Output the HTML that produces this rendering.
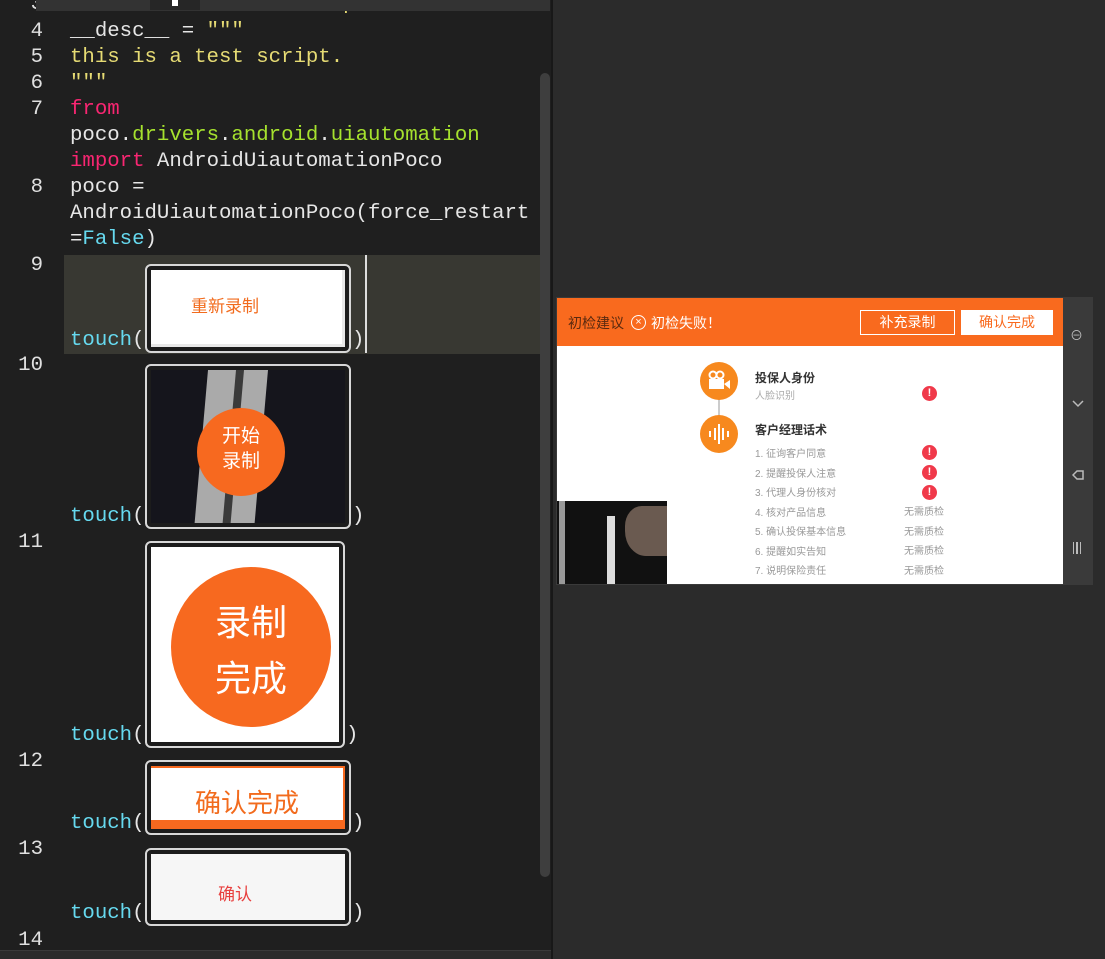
<!DOCTYPE html>
<html><head><meta charset="utf-8"><style>
*{margin:0;padding:0;box-sizing:border-box}
body{width:1105px;height:959px;overflow:hidden;background:#2b2b2b;position:relative;font-family:"Liberation Sans","Noto Sans CJK SC",sans-serif}
.ed{position:absolute;left:0;top:0;width:551px;height:959px;background:#1f1f1f;overflow:hidden}
.t{position:absolute;font-family:"Liberation Mono","DejaVu Sans Mono",monospace;font-size:20.7px;line-height:26px;color:#e6e6e6;white-space:pre}
.n{position:absolute;left:0;width:43px;text-align:right;font-family:"Liberation Mono",monospace;font-size:20.7px;line-height:26px;color:#e0e0e0}
.y{color:#e6db74}.p{color:#f92672}.g{color:#a6e22e}.c{color:#66d9ef}
.box{position:absolute;border:2px solid #d8d8d8;border-radius:6px;background:#1c1c1c;padding:4px}
.box>div{width:100%;height:100%;position:relative;overflow:hidden}
.abs{position:absolute}
.cn{font-family:"Liberation Sans","Noto Sans CJK SC",sans-serif}
</style></head><body>
<div class="ed">
<div class="n" style="top:-8px">3</div>
<div class="t" style="left:70px;top:-8px">__title__ = <span class="y">"test script title"</span></div>
<div class="abs" style="left:36px;top:0;width:514px;height:11px;background:#333"></div>
<div class="abs" style="left:150px;top:0;width:50px;height:10px;background:#262626"></div>
<div class="abs" style="left:172px;top:0;width:6px;height:6px;background:#fff"></div>
<div class="abs" style="left:64px;top:255px;width:476px;height:99px;background:#383832"></div>
<div class="abs" style="left:365px;top:255px;width:2px;height:98px;background:#ddd"></div>
<div class="abs" style="left:540px;top:73px;width:10px;height:804px;background:#3e3e3e;border-radius:5px"></div>

<div class="n" style="top:19px">4</div>
<div class="t" style="left:70px;top:19px">__desc__ = <span class="y">"""</span></div>
<div class="n" style="top:45px">5</div>
<div class="t y" style="left:70px;top:45px">this is a test script.</div>
<div class="n" style="top:71px">6</div>
<div class="t y" style="left:70px;top:71px">"""</div>
<div class="n" style="top:97px">7</div>
<div class="t" style="left:70px;top:97px"><span class="p">from</span>
poco.<span class="g">drivers</span>.<span class="g">android</span>.<span class="g">uiautomation</span>
<span class="p">import</span> AndroidUiautomationPoco</div>
<div class="n" style="top:175px">8</div>
<div class="t" style="left:70px;top:175px">poco =
AndroidUiautomationPoco(force_restart
=<span class="c">False</span>)</div>
<div class="n" style="top:253px">9</div>
<div class="t" style="left:70px;top:328px"><span class="c">touch</span>(</div>
<div class="t" style="left:352px;top:328px">)</div>
<div class="n" style="top:353px">10</div>
<div class="t" style="left:70px;top:504px"><span class="c">touch</span>(</div>
<div class="t" style="left:352px;top:504px">)</div>
<div class="n" style="top:530px">11</div>
<div class="t" style="left:70px;top:723px"><span class="c">touch</span>(</div>
<div class="t" style="left:346px;top:723px">)</div>
<div class="n" style="top:749px">12</div>
<div class="t" style="left:70px;top:811px"><span class="c">touch</span>(</div>
<div class="t" style="left:352px;top:811px">)</div>
<div class="n" style="top:837px">13</div>
<div class="t" style="left:70px;top:901px"><span class="c">touch</span>(</div>
<div class="t" style="left:352px;top:901px">)</div>
<div class="n" style="top:928px">14</div>

<div class="box" style="left:145px;top:264px;width:206px;height:89px"><div style="background:#fff;border-right:3px solid #e8e8e8;border-bottom:3px solid #e8e8e8">
<div class="abs cn" style="left:40px;top:22px;font-size:17px;color:#f26b1d">重新录制</div></div></div>

<div class="box" style="left:145px;top:364px;width:206px;height:165px"><div style="background:#15151c">
<div class="abs" style="left:50px;top:0;width:60px;height:160px;background:#aaa;transform:skewX(-5deg)"></div>
<div class="abs" style="left:78px;top:0;width:8px;height:160px;background:#3a3a3a;transform:skewX(-5deg)"></div>
<div class="abs" style="left:46px;top:38px;width:88px;height:88px;border-radius:50%;background:#f7691f"></div>
<div class="abs cn" style="left:46px;top:54px;width:88px;text-align:center;font-size:19px;line-height:25px;color:#fff">开始<br>录制</div></div></div>

<div class="box" style="left:145px;top:541px;width:200px;height:207px"><div style="background:#fff">
<div class="abs" style="left:20px;top:20px;width:160px;height:160px;border-radius:50%;background:#f7691f"></div>
<div class="abs cn" style="left:20px;top:48px;width:160px;text-align:center;font-size:36px;line-height:56px;color:#fff">录制<br>完成</div></div></div>

<div class="box" style="left:145px;top:760px;width:206px;height:75px"><div style="background:#fff;border-top:2px solid #f7691f;border-right:2px solid #f7691f">
<div class="abs cn" style="left:0;top:15px;width:100%;text-align:center;font-size:26px;color:#f26b1d">确认完成</div>
<div class="abs" style="left:0;bottom:0;width:100%;height:9px;background:#f7691f"></div></div></div>

<div class="box" style="left:145px;top:848px;width:206px;height:78px"><div style="background:#f6f6f6">
<div class="abs cn" style="left:0;top:26px;width:168px;text-align:center;font-size:17px;color:#e8403f">确认</div></div></div>

<div class="abs" style="left:0;top:950px;width:551px;height:9px;background:#2b2b2b;border-top:1px solid #3a3a3a"></div>
</div>

<div class="abs" style="left:551px;top:0;width:2px;height:959px;background:#181818"></div>
<div class="abs" style="left:556px;top:297px;width:537px;height:288px;background:#3a3a3a"></div>
<div class="abs" style="left:557px;top:298px;width:506px;height:286px;background:#fff;overflow:hidden">
 <div class="abs" style="left:0;top:0;width:506px;height:48px;background:#f96a1e"></div>
 <div class="abs" style="left:11px;top:15px;font-size:14px;color:#5a2a10">初检建议</div>
 <div class="abs" style="left:74px;top:17px;width:15px;height:15px;border:1.5px solid #fff;border-radius:50%;color:#fff;font-size:11px;line-height:12px;text-align:center">×</div>
 <div class="abs" style="left:94px;top:15px;font-size:14px;color:#fff">初检失败！</div>
 <div class="abs" style="left:303px;top:12px;width:95px;height:25px;border:1px solid #fff;color:#fff;font-size:14px;text-align:center;line-height:23px">补充录制</div>
 <div class="abs" style="left:404px;top:12px;width:92px;height:25px;background:#fff;color:#f96a1e;font-size:14px;text-align:center;line-height:25px">确认完成</div>
 <div class="abs" style="left:161px;top:100px;width:2px;height:20px;background:#ccc"></div>
 <div class="abs" style="left:143px;top:64px;width:38px;height:38px;border-radius:50%;background:#f7891e"></div>
 <svg class="abs" style="left:150px;top:72px" width="24" height="22" viewBox="0 0 24 22"><circle cx="6" cy="5" r="3.5" fill="none" stroke="#fff" stroke-width="2"/><circle cx="13" cy="5" r="3.5" fill="none" stroke="#fff" stroke-width="2"/><rect x="2" y="9" width="15" height="10" fill="#fff"/><path d="M17 14 L23 10 V19 Z" fill="#fff"/></svg>
 <div class="abs" style="left:143px;top:117px;width:38px;height:38px;border-radius:50%;background:#f7891e"></div>
 <svg class="abs" style="left:150px;top:124px" width="24" height="24"><g stroke="#fff" stroke-width="2"><line x1="3" y1="9" x2="3" y2="15"/><line x1="8" y1="6" x2="8" y2="18"/><line x1="12" y1="2" x2="12" y2="22"/><line x1="16" y1="6" x2="16" y2="18"/><line x1="21" y1="9" x2="21" y2="15"/></g></svg>
 <div class="abs" style="left:198px;top:71px;font-size:12px;font-weight:bold;color:#333">投保人身份</div>
 <div class="abs" style="left:198px;top:89px;font-size:10px;color:#aaa">人脸识别</div>
 <div class="abs" style="left:198px;top:123px;font-size:12px;font-weight:bold;color:#333">客户经理话术</div>
 <div class="abs" style="left:198px;top:147px;font-size:10px;line-height:19.5px;color:#999">1. 征询客户同意<br>2. 提醒投保人注意<br>3. 代理人身份核对<br>4. 核对产品信息<br>5. 确认投保基本信息<br>6. 提醒如实告知<br>7. 说明保险责任</div>
 <div class="abs" style="left:347px;top:205px;font-size:10px;line-height:19.5px;color:#999">无需质检<br>无需质检<br>无需质检<br>无需质检</div>
 <div class="abs" style="left:365px;top:88px;width:15px;height:15px;border-radius:50%;background:#f0394a;color:#fff;font-size:11px;font-weight:bold;text-align:center;line-height:15px">!</div>
 <div class="abs" style="left:365px;top:147px;width:15px;height:15px;border-radius:50%;background:#f0394a;color:#fff;font-size:11px;font-weight:bold;text-align:center;line-height:15px">!</div>
 <div class="abs" style="left:365px;top:167px;width:15px;height:15px;border-radius:50%;background:#f0394a;color:#fff;font-size:11px;font-weight:bold;text-align:center;line-height:15px">!</div>
 <div class="abs" style="left:365px;top:187px;width:15px;height:15px;border-radius:50%;background:#f0394a;color:#fff;font-size:11px;font-weight:bold;text-align:center;line-height:15px">!</div>
 <div class="abs" style="left:0;top:203px;width:110px;height:83px;background:#111">
  <div class="abs" style="left:2px;top:0;width:6px;height:83px;background:#999"></div>
  <div class="abs" style="left:50px;top:15px;width:8px;height:68px;background:#ddd"></div>
  <div class="abs" style="left:68px;top:5px;width:42px;height:50px;border-radius:40% 0 0 50%;background:#6a5a50"></div>
 </div>
</div>
<div class="abs" style="left:1070px;top:325px;color:#bbb;font-size:13px">⊖</div>
<svg class="abs" style="left:1072px;top:399px" width="12" height="10"><path d="M1 2 L6 7 L11 2" fill="none" stroke="#bbb" stroke-width="1.5"/></svg>
<svg class="abs" style="left:1072px;top:469px" width="12" height="12"><path d="M1 6 L5 2 H11 V10 H5 Z" fill="none" stroke="#bbb" stroke-width="1.5"/></svg>
<div class="abs" style="left:1073px;top:542px;width:8px;height:12px;border-left:1.5px solid #bbb;border-right:1.5px solid #bbb"><div style="margin-left:2px;width:1.5px;height:12px;background:#bbb"></div></div>
</body></html>
